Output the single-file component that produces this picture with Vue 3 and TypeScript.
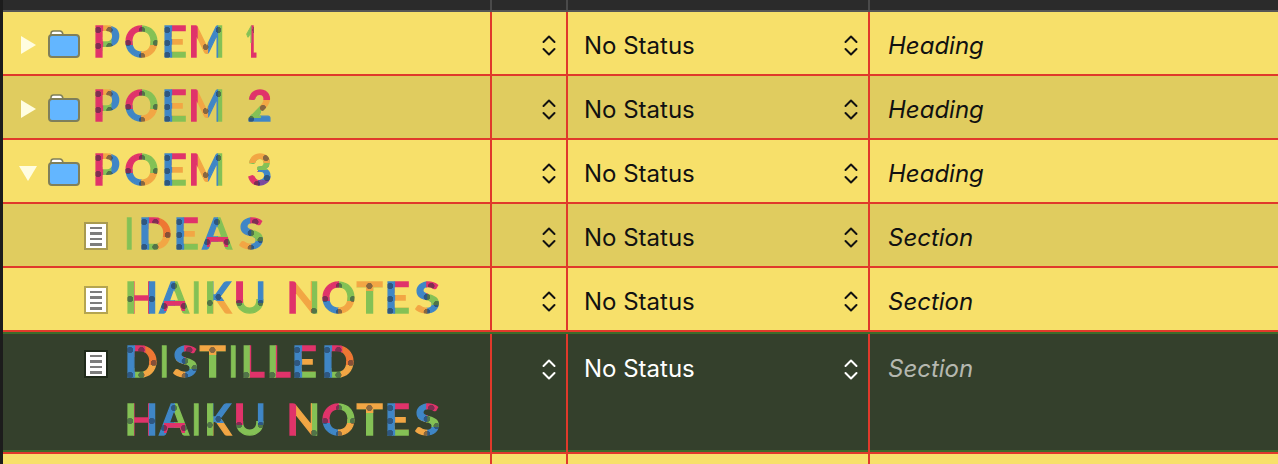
<script setup lang="ts">
type Rect = [number, number, number, number, string];
type Dot = [number, number];
interface Glyph {
  w: number;
  r: Rect[];
  d: Dot[];
}
interface Row {
  kind: "folder" | "doc";
  open?: boolean;
  lines: { text: string; adv: number[] }[];
  type: string;
  selected?: boolean;
  alt?: boolean;
  light?: boolean;
}

const R = "#e0336a";
const B = "#3f86c6";
const G = "#84c155";
const O = "#f2a644";
const D = "#ee7733";
const V = "#7a4a9e";

// colour bands and joints of each letter, in px from the top left of its ink
const glyphs: Record<string, Glyph> = {
  P: { w: 25, r: [[0, 0, 7, 31, R], [7, 0, 8, 8, O], [7, 14, 8, 8, G], [15, 0, 10, 24, B]], d: [[3, 3], [14, 3], [3, 19], [14, 19]] },
  O: { w: 33, r: [[0, 0, 16, 16, R], [16, 0, 17, 16, G], [16, 16, 17, 15, O], [0, 16, 16, 15, B]], d: [[16.5, 2.5], [2.5, 16], [30.5, 16], [16.5, 29]] },
  E: { w: 22, r: [[0, 0, 7, 31, B], [7, 0, 15, 8, R], [7, 8, 15, 15, O], [7, 23, 15, 8, G]], d: [[3, 3], [3, 16], [3, 28]] },
  M: { w: 32, r: [[0, 0, 6, 31, R], [6, 0, 10, 31, O], [16, 0, 10, 31, B], [26, 0, 6, 31, G]], d: [[15, 20], [28, 3]] },
  "1": { w: 11, r: [[0, 0, 5, 14, G], [5, 0, 6, 31, R]], d: [[8, 3]] },
  "2": { w: 23, r: [[0, 0, 23, 7, R], [12, 7, 11, 10, O], [0, 7, 12, 18, G], [0, 25, 23, 6, B]], d: [[15, 17], [3, 28]] },
  "3": { w: 23, r: [[0, 0, 23, 6, O], [0, 6, 23, 7, G], [10, 13, 13, 10, B], [10, 23, 13, 8, V], [0, 18, 10, 13, R]], d: [[18, 3], [3, 13], [19, 23], [9, 29]] },
  I: { w: 6, r: [[0, 0, 6, 31, G]], d: [] },
  D: { w: 30, r: [[0, 0, 7, 31, B], [7, 0, 10, 8, R], [17, 0, 13, 16, D], [17, 16, 13, 15, O], [7, 23, 10, 8, G]], d: [[3, 3], [14, 3], [3, 28], [14, 28], [27, 16]] },
  A: { w: 32, r: [[6, 20, 20, 6, R], [0, 0, 16, 31, B], [16, 0, 16, 31, G]], d: [[16, 3], [6, 23], [26, 23]] },
  S: { w: 25, r: [[12, 0, 13, 9, R], [0, 0, 12, 15, B], [12, 9, 13, 11, G], [0, 15, 12, 16, O], [12, 20, 13, 11, B]], d: [[17, 3], [13, 14], [22, 21], [13, 29]] },
  H: { w: 28, r: [[0, 0, 6, 31, G], [22, 0, 6, 31, B], [6, 0, 16, 31, R]], d: [[3, 15.5], [25, 15.5]] },
  K: { w: 26, r: [[0, 0, 6, 31, G], [6, 0, 20, 16, B], [6, 16, 20, 15, O]], d: [[3, 20], [11, 14]] },
  U: { w: 28, r: [[0, 0, 6, 18, R], [22, 0, 6, 18, B], [0, 18, 28, 13, G]], d: [[3, 20], [25, 20]] },
  N: { w: 28, r: [[0, 0, 6, 31, R], [6, 0, 16, 31, O], [22, 0, 6, 31, G]], d: [[25, 28]] },
  T: { w: 27, r: [[0, 0, 27, 6, O], [0, 6, 27, 25, G]], d: [[13.5, 3]] },
  L: { w: 22, r: [[0, 0, 6, 31, G], [6, 0, 16, 31, R]], d: [[3, 28]] },
};

const CAP_TOP = 15;
const ctx = document.createElement("canvas").getContext("2d")!;
ctx.font = "700 42px Lato";

function letterStyle(ch: string) {
  const g = glyphs[ch];
  if (!g) return {};
  const m = ctx.measureText(ch);
  const ink = m.actualBoundingBoxLeft + m.actualBoundingBoxRight;
  const sx = (g.w - 1) / ink;
  const rad = `radial-gradient(circle, rgba(30,40,60,.5) 2.8px, transparent 3.3px)`;
  const layers: string[] = [];
  for (const [x, y] of g.d) {
    layers.push(`${rad} ${(x - 4) / sx + 2}px ${y - 4 + CAP_TOP}px / ${8 / sx}px 8px no-repeat`);
  }
  for (const [x, y, w, h, c] of g.r) {
    layers.push(`linear-gradient(${c},${c}) ${x / sx + 2}px ${y + CAP_TOP - 2}px / ${w / sx + 1}px ${h + 4}px no-repeat`);
  }
  return {
    width: `${g.w / sx + 8}px`,
    marginLeft: `-2px`,
    paddingLeft: `2.5px`,
    textIndent: `${m.actualBoundingBoxLeft}px`,
    transform: `scaleX(${sx})`,
    background: layers.join(","),
    WebkitBackgroundClip: "text",
    backgroundClip: "text",
  };
}

const haiku = { text: "HAIKU NOTES", adv: [31, 36, 13, 29, 28, 25, 33, 34, 31, 27, 25] };

const rows: Row[] = [
  { kind: "folder", lines: [{ text: "POEM 1", adv: [30, 39, 27, 32, 24, 25] }], type: "Heading" },
  { kind: "folder", alt: true, lines: [{ text: "POEM 2", adv: [30, 39, 27, 32, 25, 25] }], type: "Heading" },
  { kind: "folder", open: true, lines: [{ text: "POEM 3", adv: [30, 39, 27, 32, 25, 25] }], type: "Heading" },
  { kind: "doc", alt: true, lines: [{ text: "IDEAS", adv: [14, 35, 25, 37, 25] }], type: "Section" },
  { kind: "doc", light: true, lines: [haiku], type: "Section" },
  {
    kind: "doc",
    selected: true,
    lines: [{ text: "DISTILLED", adv: [35, 10, 27, 32, 12, 26, 25, 30, 27] }, haiku],
    type: "Section",
  },
];
</script>

<template>
  <div class="outline">
    <div class="head">
      <i class="tick" style="left: 490px"></i>
      <i class="tick" style="left: 566px"></i>
      <i class="tick" style="left: 868px"></i>
    </div>
    <div
      v-for="(row, i) in rows"
      :key="i"
      class="row"
      :class="{ alt: row.alt, selected: row.selected, light: row.light }"
    >
      <div class="cell title" :class="row.kind">
        <template v-if="row.kind === 'folder'">
          <span class="arrow" :class="{ open: row.open }"></span>
          <svg class="folder-icon" width="32" height="28" viewBox="0 0 32 28">
            <path d="M3 5V3.5C3 2 4 1 5.500 1H12C13.500 1 14.500 2 15 4.500V6H3Z" fill="#fff" stroke="#7f7f5a" stroke-width="1.500" />
            <rect x="1" y="5" width="30" height="22" rx="3" fill="#63b6ff" stroke="#7f7f5a" stroke-width="2" />
          </svg>
        </template>
        <span v-else class="doc-icon">
          <i></i><i></i><i></i><i></i>
        </span>
        <div class="lines">
          <div v-for="line in row.lines" :key="line.text" class="line">
            <span
              v-for="(ch, n) in line.text"
              :key="n"
              class="slot"
              :style="{ width: line.adv[n] + 'px' }"
            ><span class="letter" :style="letterStyle(ch)">{{ ch }}</span></span>
          </div>
        </div>
      </div>
      <div class="cell pick">
        <svg class="updown" width="14" height="22" viewBox="0 0 14 22" fill="none" stroke="currentColor" stroke-width="2" stroke-linecap="round" stroke-linejoin="round">
          <path d="M1.500 8 7 2.500 12.500 8" />
          <path d="M1.500 15 7 20.500 12.500 15" />
        </svg>
      </div>
      <div class="cell pick status">
        <span class="status-text">No Status</span>
        <svg class="updown" width="14" height="22" viewBox="0 0 14 22" fill="none" stroke="currentColor" stroke-width="2" stroke-linecap="round" stroke-linejoin="round">
          <path d="M1.500 8 7 2.500 12.500 8" />
          <path d="M1.500 15 7 20.500 12.500 15" />
        </svg>
      </div>
      <div class="cell type">{{ row.type }}</div>
    </div>
    <div class="row rest">
      <div class="cell"></div>
      <div class="cell"></div>
      <div class="cell"></div>
      <div class="cell"></div>
    </div>
  </div>
</template>

<style scoped>
.outline {
  width: 1278px;
  height: 464px;
  overflow: hidden;
  background: #f7e06a;
  font-family: Inter, "Liberation Sans", sans-serif;
  color: #111;
  position: relative;
}
.outline::before {
  content: "";
  position: absolute;
  left: 0;
  top: 0;
  bottom: 0;
  width: 3px;
  background: #1c1c1c;
  z-index: 2;
}
.head {
  height: 10px;
  background: #2b2b2b;
  border-bottom: 2px solid #555;
  position: relative;
}
.tick {
  position: absolute;
  top: 0;
  width: 2px;
  height: 10px;
  background: #4a4a4a;
}
.row {
  display: grid;
  grid-template-columns: 492px 76px 302px 1fr;
  height: 64px;
  box-sizing: border-box;
  border-bottom: 2px solid #e0392b;
  background: #f7e06a;
}
.row.alt {
  background: #e0cc5f;
}
.row.selected {
  height: 122px;
  background: #34402c;
  color: #fff;
  border-top: 2px solid #3d6b2a;
  box-shadow: inset 0 -2px 0 #3d6b2a;
}
.row.rest {
  height: 20px;
  border-bottom: 0;
}
.cell {
  border-right: 2px solid #e0392b;
  box-sizing: border-box;
  min-width: 0;
}
.cell:last-child {
  border-right: 0;
}
.title {
  display: flex;
  align-items: flex-start;
}
.title.folder {
  padding-left: 18px;
}
.title.doc {
  padding-left: 84px;
}
.arrow {
  width: 0;
  height: 0;
  margin: 24px 12px 0 3px;
  border-left: 15px solid #fffde0;
  border-top: 9px solid transparent;
  border-bottom: 9px solid transparent;
}
.arrow.open {
  margin: 26px 11px 0 1px;
  border-left: 9px solid transparent;
  border-right: 9px solid transparent;
  border-top: 15px solid #fffde0;
  border-bottom: 0;
}
.folder-icon {
  margin-top: 18px;
  flex: none;
}
.doc-icon {
  width: 24px;
  height: 28px;
  margin-top: 18px;
  flex: none;
  box-sizing: border-box;
  border: 2px solid #a89a50;
  background: #fff;
  display: flex;
  flex-direction: column;
  justify-content: center;
  align-items: center;
  gap: 3px;
}
.light .doc-icon {
  border-color: #b5a550;
}
.selected .doc-icon {
  border-color: #1f2a1a;
  margin-top: 16px;
}
.doc-icon i {
  width: 12px;
  height: 2.500px;
  background: #7d7d7d;
}
.lines {
  margin-top: 0;
  margin-left: 15px;
}
.title.doc .lines {
  margin-left: 19px;
}
.selected .lines {
  margin-top: -2px;
}
.line {
  display: flex;
  height: 58px;
}
.slot {
  display: block;
  flex: none;
  height: 58px;
}
.letter {
  display: block;
  box-sizing: content-box;
  height: 58px;
  line-height: 58px;
  font-family: Lato, sans-serif;
  font-weight: 700;
  font-size: 42px;
  white-space: nowrap;
  color: transparent;
  -webkit-text-stroke: 1.300px transparent;
  transform-origin: 0 0;
}
.pick {
  display: flex;
  align-items: flex-start;
  justify-content: flex-end;
  padding: 22px 10px 0 0;
}
.selected .pick {
  padding-top: 24px;
}
.selected .status-text {
  margin-top: -1px;
}
.updown {
  flex: none;
}
.status {
  justify-content: space-between;
  padding-left: 16px;
  font-size: 24px;
  line-height: 24px;
}
.type {
  padding: 23px 0 0 18px;
  font-size: 24px;
  line-height: 22px;
  font-style: italic;
}
.selected .type {
  padding-top: 24px;
  color: #b5b8b0;
}
</style>
